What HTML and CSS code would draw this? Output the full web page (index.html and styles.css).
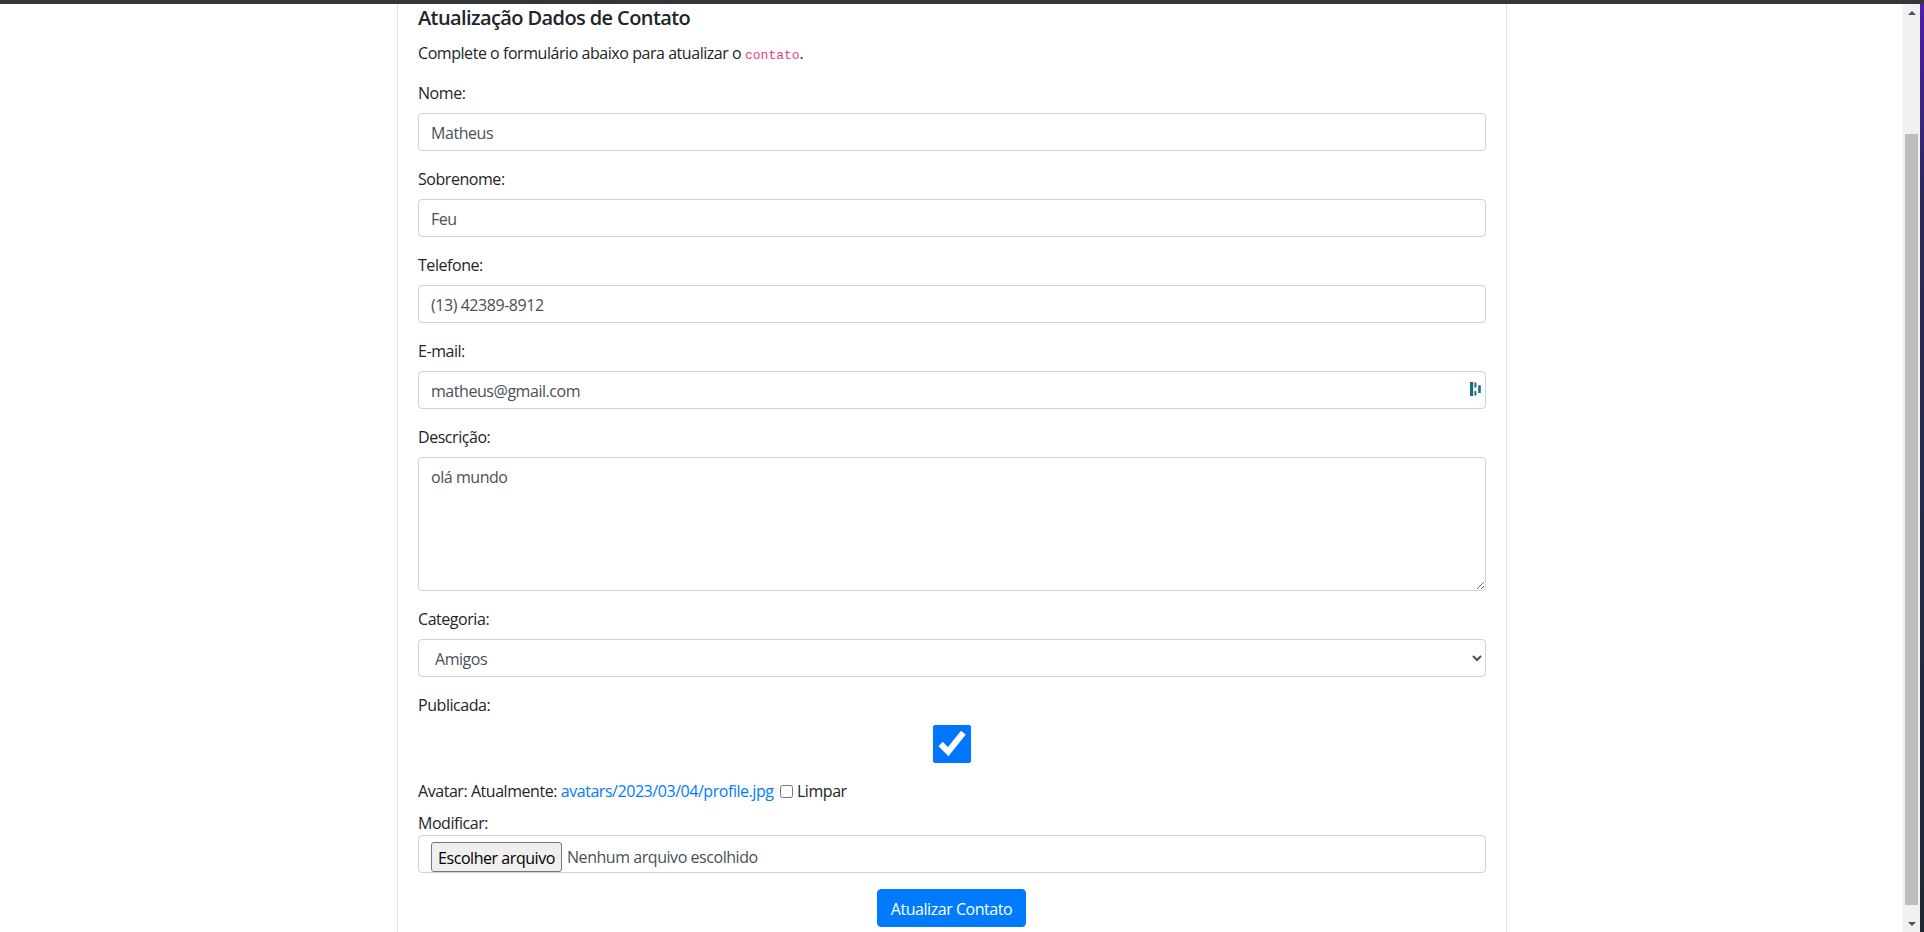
FILE: index.html
```html
<!DOCTYPE html>
<html lang="pt-BR">
<head>
    <meta charset="UTF-8">
    <meta name="viewport" content="width=device-width, initial-scale=1.0">
    <title>Atualização Dados de Contato</title>
    <link rel="stylesheet" href="styles.css">
</head>
<body>
    <div class="top-bar"></div>
    <div class="window">
        <div class="viewport">
            <div class="container">
                <div class="card">
                    <h5 class="card-title">Atualização Dados de Contato</h5>
                    <p class="card-text">Complete o formulário abaixo para atualizar o <code>contato</code>.</p>
                    <form>
                        <div class="form-group">
                            <label for="nome">Nome:</label>
                            <input id="nome" class="form-control" type="text" value="Matheus">
                        </div>
                        <div class="form-group">
                            <label for="sobrenome">Sobrenome:</label>
                            <input id="sobrenome" class="form-control" type="text" value="Feu">
                        </div>
                        <div class="form-group">
                            <label for="telefone">Telefone:</label>
                            <input id="telefone" class="form-control" type="text" value="(13) 42389-8912">
                        </div>
                        <div class="form-group">
                            <label for="email">E-mail:</label>
                            <div class="input-wrap">
                                <input id="email" class="form-control" type="text" value="matheus@gmail.com">
                                <svg class="dash-icon" width="11" height="14" viewBox="0 0 11 14">
                                    <rect x="0" y="0" width="3.2" height="14" />
                                    <rect x="4.4" y="0.5" width="2" height="5" />
                                    <rect x="4.4" y="9" width="2" height="4.5" />
                                    <rect x="8.2" y="3.3" width="2.6" height="7.7" />
                                </svg>
                            </div>
                        </div>
                        <div class="form-group">
                            <label for="descricao">Descrição:</label>
                            <textarea id="descricao" class="form-control" rows="5">olá mundo</textarea>
                        </div>
                        <div class="form-group">
                            <label for="categoria">Categoria:</label>
                            <select id="categoria" class="form-control">
                                <option>Amigos</option>
                                <option>Família</option>
                                <option>Trabalho</option>
                            </select>
                        </div>
                        <div class="form-group">
                            <label for="publicada">Publicada:</label>
                            <input id="publicada" class="form-control check-big" type="checkbox" checked>
                        </div>
                        <div class="form-group">
                            <label>Avatar:</label>
                            Atualmente: <a href="#">avatars/2023/03/04/profile.jpg</a>
                            <input id="limpar" class="check-small" type="checkbox">
                            <label for="limpar" class="inline-label">Limpar</label><br>
                            Modificar:
                            <div class="form-control file-field">
                                <button type="button" class="file-button">Escolher arquivo</button>
                                <span class="file-name">Nenhum arquivo escolhido</span>
                            </div>
                        </div>
                        <div class="actions">
                            <button type="button" class="btn-primary">Atualizar Contato</button>
                        </div>
                    </form>
                </div>
            </div>
        </div>
        <div class="scrollbar">
            <div class="arrow arrow-up"></div>
            <div class="track">
                <div class="thumb"></div>
            </div>
            <div class="arrow arrow-down"></div>
        </div>
        <div class="edge"></div>
    </div>
</body>
</html>
```

FILE: styles.css
```css
* {
    box-sizing: border-box;
}

html, body {
    height: 100%;
}

body {
    margin: 0;
    overflow: hidden;
    display: flex;
    flex-direction: column;
    background-color: #fff;
    color: #212529;
    font-family: "Open Sans", Arial, sans-serif;
    font-size: 16px;
    line-height: 24px;
    letter-spacing: -0.45px;
}

.top-bar {
    height: 4px;
    background-color: #35363a;
    flex: none;
}

.window {
    flex: 1;
    display: flex;
    min-height: 0;
}

.viewport {
    flex: 1;
    min-width: 0;
    overflow: hidden;
}

.container {
    width: 1110px;
    margin-left: 397px;
}

.card {
    border-left: 1px solid #dfdfdf;
    border-right: 1px solid #dfdfdf;
    padding: 2px 20px 20px;
}

.card-title {
    margin: 0 0 11px;
    font-size: 20px;
    line-height: 24px;
    font-weight: 600;
    letter-spacing: -0.6px;
}

.card-text {
    margin: 0 0 16px;
}

code {
    font-family: "Liberation Mono", monospace;
    font-size: 13px;
    line-height: 1;
    color: #e83e8c;
    letter-spacing: 0;
}

label {
    display: inline-block;
    margin-bottom: 8px;
}

.form-group {
    margin-bottom: 16px;
}

.form-control {
    display: block;
    width: 100%;
    height: 38px;
    padding: 7px 12px 5px;
    font: inherit;
    letter-spacing: inherit;
    color: #495057;
    background-color: #fff;
    border: 1px solid #ced4da;
    border-radius: 4px;
}

textarea.form-control {
    height: 134px;
}

.input-wrap {
    position: relative;
}

.dash-icon {
    position: absolute;
    top: 11px;
    right: 5px;
    fill: #1d6c7f;
}

.check-big {
    margin: 0;
    padding: 0;
}

.check-small {
    margin: 0 0 0 3px;
    vertical-align: -1px;
}

.inline-label {
    margin-bottom: 0;
}

a {
    color: #007bff;
    text-decoration: none;
}

.file-field {
    display: flex;
    align-items: flex-start;
    gap: 5px;
    padding: 6px 12px 0;
    overflow: hidden;
}

.file-button {
    flex: none;
    width: 131px;
    height: 30px;
    padding: 2px 0 0;
    font: inherit;
    letter-spacing: inherit;
    color: #000;
    background-color: #efefef;
    border: 1px solid #767676;
    border-radius: 3px;
}

.file-name {
    margin-top: 3px;
}

.actions {
    text-align: center;
    padding-right: 1px;
}

.btn-primary {
    width: 149px;
    height: 38px;
    padding: 1px 0 0;
    font: inherit;
    letter-spacing: inherit;
    color: #fff;
    background-color: #007bff;
    border: 1px solid #007bff;
    border-radius: 4px;
}

.scrollbar {
    width: 17px;
    flex: none;
    display: flex;
    flex-direction: column;
    background-color: #f1f1f1;
}

.arrow {
    height: 17px;
    flex: none;
    display: flex;
    align-items: center;
    justify-content: center;
}

.arrow::before {
    content: "";
    border-left: 4px solid transparent;
    border-right: 4px solid transparent;
}

.arrow-up::before {
    border-bottom: 4px solid #505050;
}

.arrow-down::before {
    border-top: 4px solid #505050;
}

.track {
    flex: 1;
    padding: 113px 2px 10px;
    display: flex;
}

.thumb {
    flex: 1;
    background-color: #bdbdbd;
}

.edge {
    width: 4px;
    flex: none;
    background: linear-gradient(to bottom, #4e1ea8 0, #2b2a55 200px, #1f2833 100%);
}
```
